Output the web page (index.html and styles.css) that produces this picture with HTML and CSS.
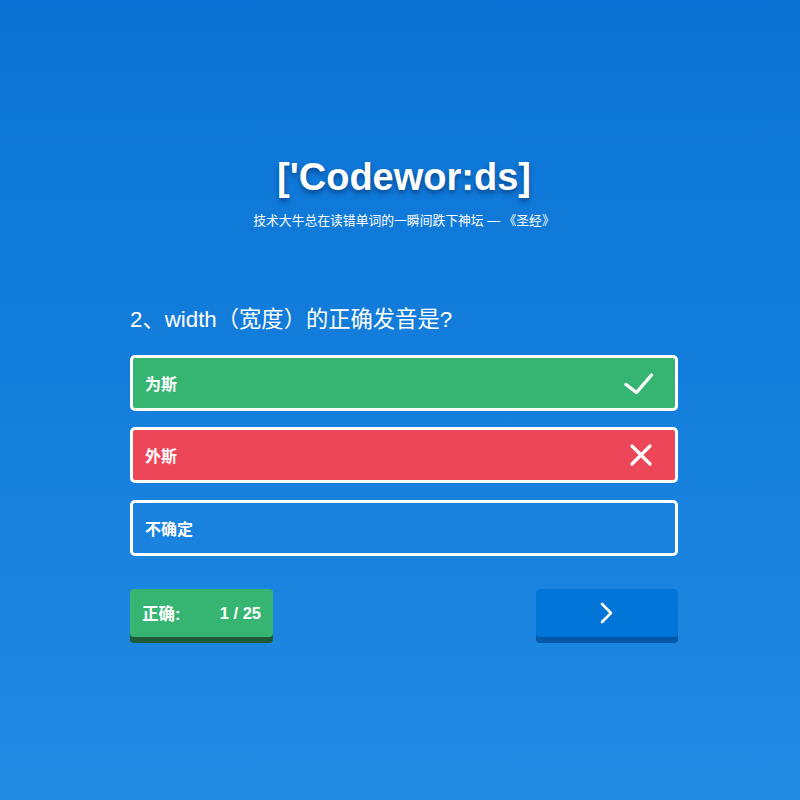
FILE: index.html
```html
<!DOCTYPE html>
<html lang="zh-CN">
<head>
<meta charset="utf-8">
<title>Codewords</title>
<link rel="stylesheet" href="styles.css">
</head>
<body>
<main class="page">
  <header class="hero">
    <h1 class="logo">['Codewor:ds]</h1>
    <p class="motto">技术大牛总在读错单词的一瞬间跌下神坛 — 《圣经》</p>
  </header>
  <section class="quiz">
    <h2 class="question">2、width（宽度）的正确发音是?</h2>
    <ul class="options">
      <li class="option option-right">
        <span class="option-text">为斯</span>
        <svg class="option-icon" width="32" height="32" viewBox="0 0 32 32" aria-hidden="true"><polyline points="3,17.5 13.5,25.5 28.5,8" fill="none" stroke="#fff" stroke-width="3.4" stroke-linecap="round" stroke-linejoin="round"/></svg>
      </li>
      <li class="option option-wrong">
        <span class="option-text">外斯</span>
        <svg class="option-icon" width="32" height="32" viewBox="0 0 32 32" aria-hidden="true"><path d="M9 7 L27 25 M27 7 L9 25" fill="none" stroke="#fff" stroke-width="3.2" stroke-linecap="round"/></svg>
      </li>
      <li class="option">
        <span class="option-text">不确定</span>
      </li>
    </ul>
    <div class="footer">
      <div class="score"><span>正确:</span><span>1 / 25</span></div>
      <button class="next" type="button" aria-label="下一题">
        <svg width="20" height="24" viewBox="0 0 20 24" aria-hidden="true"><polyline points="5,3 14,12 5,21" fill="none" stroke="#fff" stroke-width="2.6" stroke-linecap="round" stroke-linejoin="round"/></svg>
      </button>
    </div>
  </section>
</main>
</body>
</html>
```
FILE: styles.css
```css
html, body {
  margin: 0;
  padding: 0;
}
body {
  min-height: 800px;
  background: linear-gradient(180deg, #0a73d5 0%, #208ae3 100%);
  color: #fff;
  font-family: "Liberation Sans", "Noto Sans CJK SC", sans-serif;
}
.page {
  padding: 155px 122px 0 130px;
  width: 548px;
}
.hero {
  text-align: center;
}
.logo {
  margin: 0;
  font-size: 38px;
  line-height: 44px;
  font-weight: 700;
  text-shadow: 0 3px 5px rgba(0, 30, 80, 0.55);
}
.motto {
  margin: 13px 0 0;
  font-size: 12.8px;
  line-height: 18px;
}
.quiz {
  margin-top: 75px;
}
.question {
  margin: 0;
  font-size: 22.3px;
  line-height: 30px;
  font-weight: 400;
}
.options {
  list-style: none;
  margin: 20px 0 0;
  padding: 0;
  display: flex;
  flex-direction: column;
  gap: 16px;
}
.option {
  box-sizing: border-box;
  height: 56px;
  border: 3px solid #fff;
  border-radius: 5px;
  padding: 0 20px 0 12px;
  display: flex;
  align-items: center;
  justify-content: space-between;
}
.option + .option + .option {
  margin-top: 1px;
}
.option-text {
  font-size: 16px;
  font-weight: 700;
}
.option-right {
  background: #36b572;
}
.option-wrong {
  background: #ee4659;
}
.footer {
  margin-top: 33px;
  display: flex;
  justify-content: space-between;
  align-items: flex-start;
}
.score {
  box-sizing: border-box;
  width: 143px;
  height: 48px;
  padding: 0 12px;
  border-radius: 4px;
  background: #36b572;
  box-shadow: 0 6px 0 #1f5a37;
  display: flex;
  align-items: center;
  justify-content: space-between;
  font-size: 16.5px;
  font-weight: 700;
}
.next {
  width: 142px;
  height: 48px;
  border: 0;
  border-radius: 4px;
  background: #0275d8;
  box-shadow: 0 6px 0 #0257a6;
  display: flex;
  align-items: center;
  justify-content: center;
  padding: 0;
  cursor: pointer;
}
```
